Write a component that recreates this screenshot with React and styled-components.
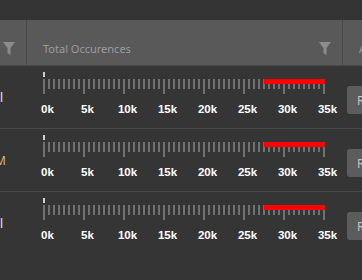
import styled, {createGlobalStyle} from "styled-components";

const GlobalStyle = createGlobalStyle`
  body {
    margin: 0;
    background: #353535;
    font-family: "Noto Sans", "Liberation Sans", sans-serif;
  }
`;

const rows = [
  {label: "Critical", color: "#e8e8e8", value: 27.6, inset: 24},
  {label: "03:12:45 PM", color: "#d6b27c", value: 27.6, inset: 21},
  {label: "General", color: "#e8e8e8", value: 27.6, inset: 24},
];

const STEP = 5;
const TICKS = 56;
const MAX = 35;

function FilterIcon() {
  return (
    <svg width="12" height="13" viewBox="0 0 12 13">
      <path d="M0 0 H12 L7.5 6 V13 L4.5 11 V6 Z" fill="#8c8c8c" />
    </svg>
  );
}

function Scale({value}) {
  const width = STEP * TICKS;
  const redStart = (value / MAX) * width;
  const labels = [0, 5, 10, 15, 20, 25, 30, 35];
  return (
    <ScaleSvg width="300" height="50">
      <rect x="0" y="0" width="2" height="5" fill="#d0d0d0" />
      {Array.from({length: TICKS + 1}, (_, i) => (
        <rect
          key={i}
          x={i * STEP}
          y="7"
          width="2"
          height={i % 8 === 0 ? 15 : 10}
          fill="#717171"
        />
      ))}
      <rect x={redStart} y="7" width={width - redStart + 2} height="5" fill="#ff0000" />
      {labels.map((l, i) => (
        <text
          key={l}
          x={i * 40 + 4.5}
          y="41"
          textAnchor="middle"
          fill="#ffffff"
          fontSize="11.5"
          fontWeight="bold"
          fontFamily="'Liberation Sans', Arial, sans-serif">
          {l}k
        </text>
      ))}
    </ScaleSvg>
  );
}

export default function App() {
  return (
    <>
      <GlobalStyle />
      <TopBand />
      <Header>
        <HeaderCell>
          <IconSlot>
            <FilterIcon />
          </IconSlot>
        </HeaderCell>
        <HeaderCell>
          <span>Total Occurences</span>
          <IconSlot>
            <FilterIcon />
          </IconSlot>
        </HeaderCell>
        <HeaderCell last>
          <span>Actions</span>
        </HeaderCell>
      </Header>
      {rows.map((row, i) => (
        <Row key={i} last={i === rows.length - 1}>
          <NameCell color={row.color} inset={row.inset}>
            <span>{row.label}</span>
          </NameCell>
          <ScaleCell>
            <Scale value={row.value} />
          </ScaleCell>
          <ActionCell>
            <ResetBtn>Reset</ResetBtn>
          </ActionCell>
        </Row>
      ))}
    </>
  );
}

const TopBand = styled.div`
  height: 20px;
  background: #333333;
`;

const Header = styled.div`
  display: grid;
  grid-template-columns: 27px 316px 1fr;
  height: 45px;
  background: #595959;
  border-bottom: 1px solid #474747;
  overflow: hidden;
`;

const HeaderCell = styled.div`
  display: flex;
  align-items: center;
  justify-content: space-between;
  padding: 12px 11px 0 16px;
  border-right: ${props => (props.last ? "none" : "1px solid #494949")};
  font-size: 11px;
  color: #9c9c9c;
  white-space: nowrap;
  overflow: hidden;

  &:first-child {
    padding: 12px 0 0 3px;
  }
`;

const IconSlot = styled.div`
  display: flex;
  width: 12px;
  height: 13px;
`;

const Row = styled.div`
  display: grid;
  grid-template-columns: 27px 316px 1fr;
  height: 62px;
  border-bottom: ${props => (props.last ? "none" : "1px solid #4a4a4a")};
  overflow: hidden;
`;

const NameCell = styled.div`
  display: flex;
  align-items: center;
  justify-content: flex-end;
  padding-right: ${props => props.inset}px;
  overflow: hidden;
  white-space: nowrap;
  font-size: 12px;
  color: ${props => props.color};
`;

const ScaleCell = styled.div`
  padding: 6px 0 0 16px;
`;

const ScaleSvg = styled.svg`
  display: block;
  overflow: visible;
`;

const ActionCell = styled.div`
  padding: 20px 0 0 4px;
  overflow: hidden;
`;

const ResetBtn = styled.button`
  height: 28px;
  padding: 0 10px;
  border: none;
  border-radius: 3px;
  background: #5c5c5c;
  color: #c4c4c4;
  font-family: "Noto Sans", "Liberation Sans", sans-serif;
  font-size: 12px;
  white-space: nowrap;
`;
